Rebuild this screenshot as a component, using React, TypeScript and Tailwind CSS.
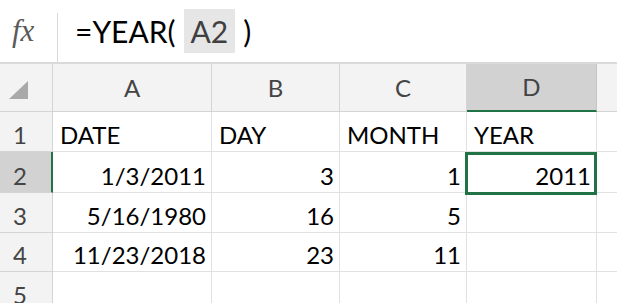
import React from 'react'

const FONT = { fontFamily: 'Lato, "Open Sans", sans-serif' }

const COLS = [
  { key: 'A', w: 'w-[159px]' },
  { key: 'B', w: 'w-[128px]' },
  { key: 'C', w: 'w-[127px]' },
  { key: 'D', w: 'w-[130px]' },
]

type Cell = { v: string; align: 'l' | 'r' }

const ROWS: { n: number; h: string; cells: Cell[] }[] = [
  {
    n: 1,
    h: 'h-[40px]',
    cells: [
      { v: 'DATE', align: 'l' },
      { v: 'DAY', align: 'l' },
      { v: 'MONTH', align: 'l' },
      { v: 'YEAR', align: 'l' },
    ],
  },
  {
    n: 2,
    h: 'h-[41px]',
    cells: [
      { v: '1/3/2011', align: 'r' },
      { v: '3', align: 'r' },
      { v: '1', align: 'r' },
      { v: '2011', align: 'r' },
    ],
  },
  {
    n: 3,
    h: 'h-[40px]',
    cells: [
      { v: '5/16/1980', align: 'r' },
      { v: '16', align: 'r' },
      { v: '5', align: 'r' },
      { v: '', align: 'r' },
    ],
  },
  {
    n: 4,
    h: 'h-[39px]',
    cells: [
      { v: '11/23/2018', align: 'r' },
      { v: '23', align: 'r' },
      { v: '11', align: 'r' },
      { v: '', align: 'r' },
    ],
  },
  {
    n: 5,
    h: 'h-[40px]',
    cells: [
      { v: '', align: 'r' },
      { v: '', align: 'r' },
      { v: '', align: 'r' },
      { v: '', align: 'r' },
    ],
  },
]

export default function App() {
  return (
    <div className="w-[617px] h-[303px] overflow-hidden bg-white relative" style={FONT}>
      {/* formula bar */}
      <div className="h-[64px] flex border-b-2 border-[#d9d9d9]">
        <div className="w-[57px] flex items-start pt-[14px] pl-[12px]">
          <span
            className="text-[31px] italic text-[#5a5a5a] leading-[34px]"
            style={{ fontFamily: '"Liberation Serif", serif' }}
          >
            fx
          </span>
        </div>
        <div className="w-px h-[49px] self-end bg-[#d9d9d9]" />
        <div className="flex items-center pl-[17px] text-[30px] text-black">
          <span>=YEAR(</span>
          <span className="ml-[8px] h-[44px] px-[7px] flex items-center bg-[#e6e6e6] text-[#404040]">A2</span>
          <span className="ml-[8px]">)</span>
        </div>
      </div>

      {/* column headers */}
      <div className="flex h-[48px] bg-[#f3f3f3] text-[#444] text-[24px]">
        <div className="w-[53px] border-r border-b border-[#d4d4d4] relative">
          <svg className="absolute left-[9px] top-[17px]" width="20" height="19" viewBox="0 0 20 19">
            <polygon points="19,0 19,18 0,18" fill="#a9a9a9" />
          </svg>
        </div>
        {COLS.map((c) => (
          <div
            key={c.key}
            className={`${c.w} flex items-center justify-center border-r ${
              c.key === 'D'
                ? 'bg-[#d2d2d2] border-b-2 border-b-[#217346] border-r-[#c6c6c6]'
                : 'border-b border-[#d4d4d4]'
            }`}
          >
            {c.key}
          </div>
        ))}
        <div className="flex-1 border-b border-[#d4d4d4]" />
      </div>

      {/* rows */}
      {ROWS.map((r) => (
        <div key={r.n} className={`flex ${r.h} text-[24px]`}>
          <div
            className={`w-[53px] flex items-end pb-[2px] pl-[13px] text-[#444] leading-[29px] border-b border-[#d4d4d4] ${
              r.n === 2 ? 'bg-[#d2d2d2] border-r-2 border-r-[#217346]' : 'bg-[#f3f3f3] border-r border-r-[#d4d4d4]'
            }`}
          >
            {r.n}
          </div>
          {COLS.map((c, i) => {
            const cell = r.cells[i]
            return (
              <div
                key={c.key}
                className={`${c.w} flex items-end pb-[2px] leading-[29px] text-black border-r border-b border-[#e1e1e1] ${
                  cell.align === 'r' ? 'justify-end pr-[5px]' : 'justify-start pl-[7px]'
                }`}
              >
                {cell.v}
              </div>
            )
          })}
          <div className="flex-1 border-b border-[#e1e1e1]" />
        </div>
      ))}

      {/* active cell D2 */}
      <div className="absolute left-[465px] top-[152px] w-[132px] h-[43px] border-[3px] border-[#217346] pointer-events-none" />
    </div>
  )
}
